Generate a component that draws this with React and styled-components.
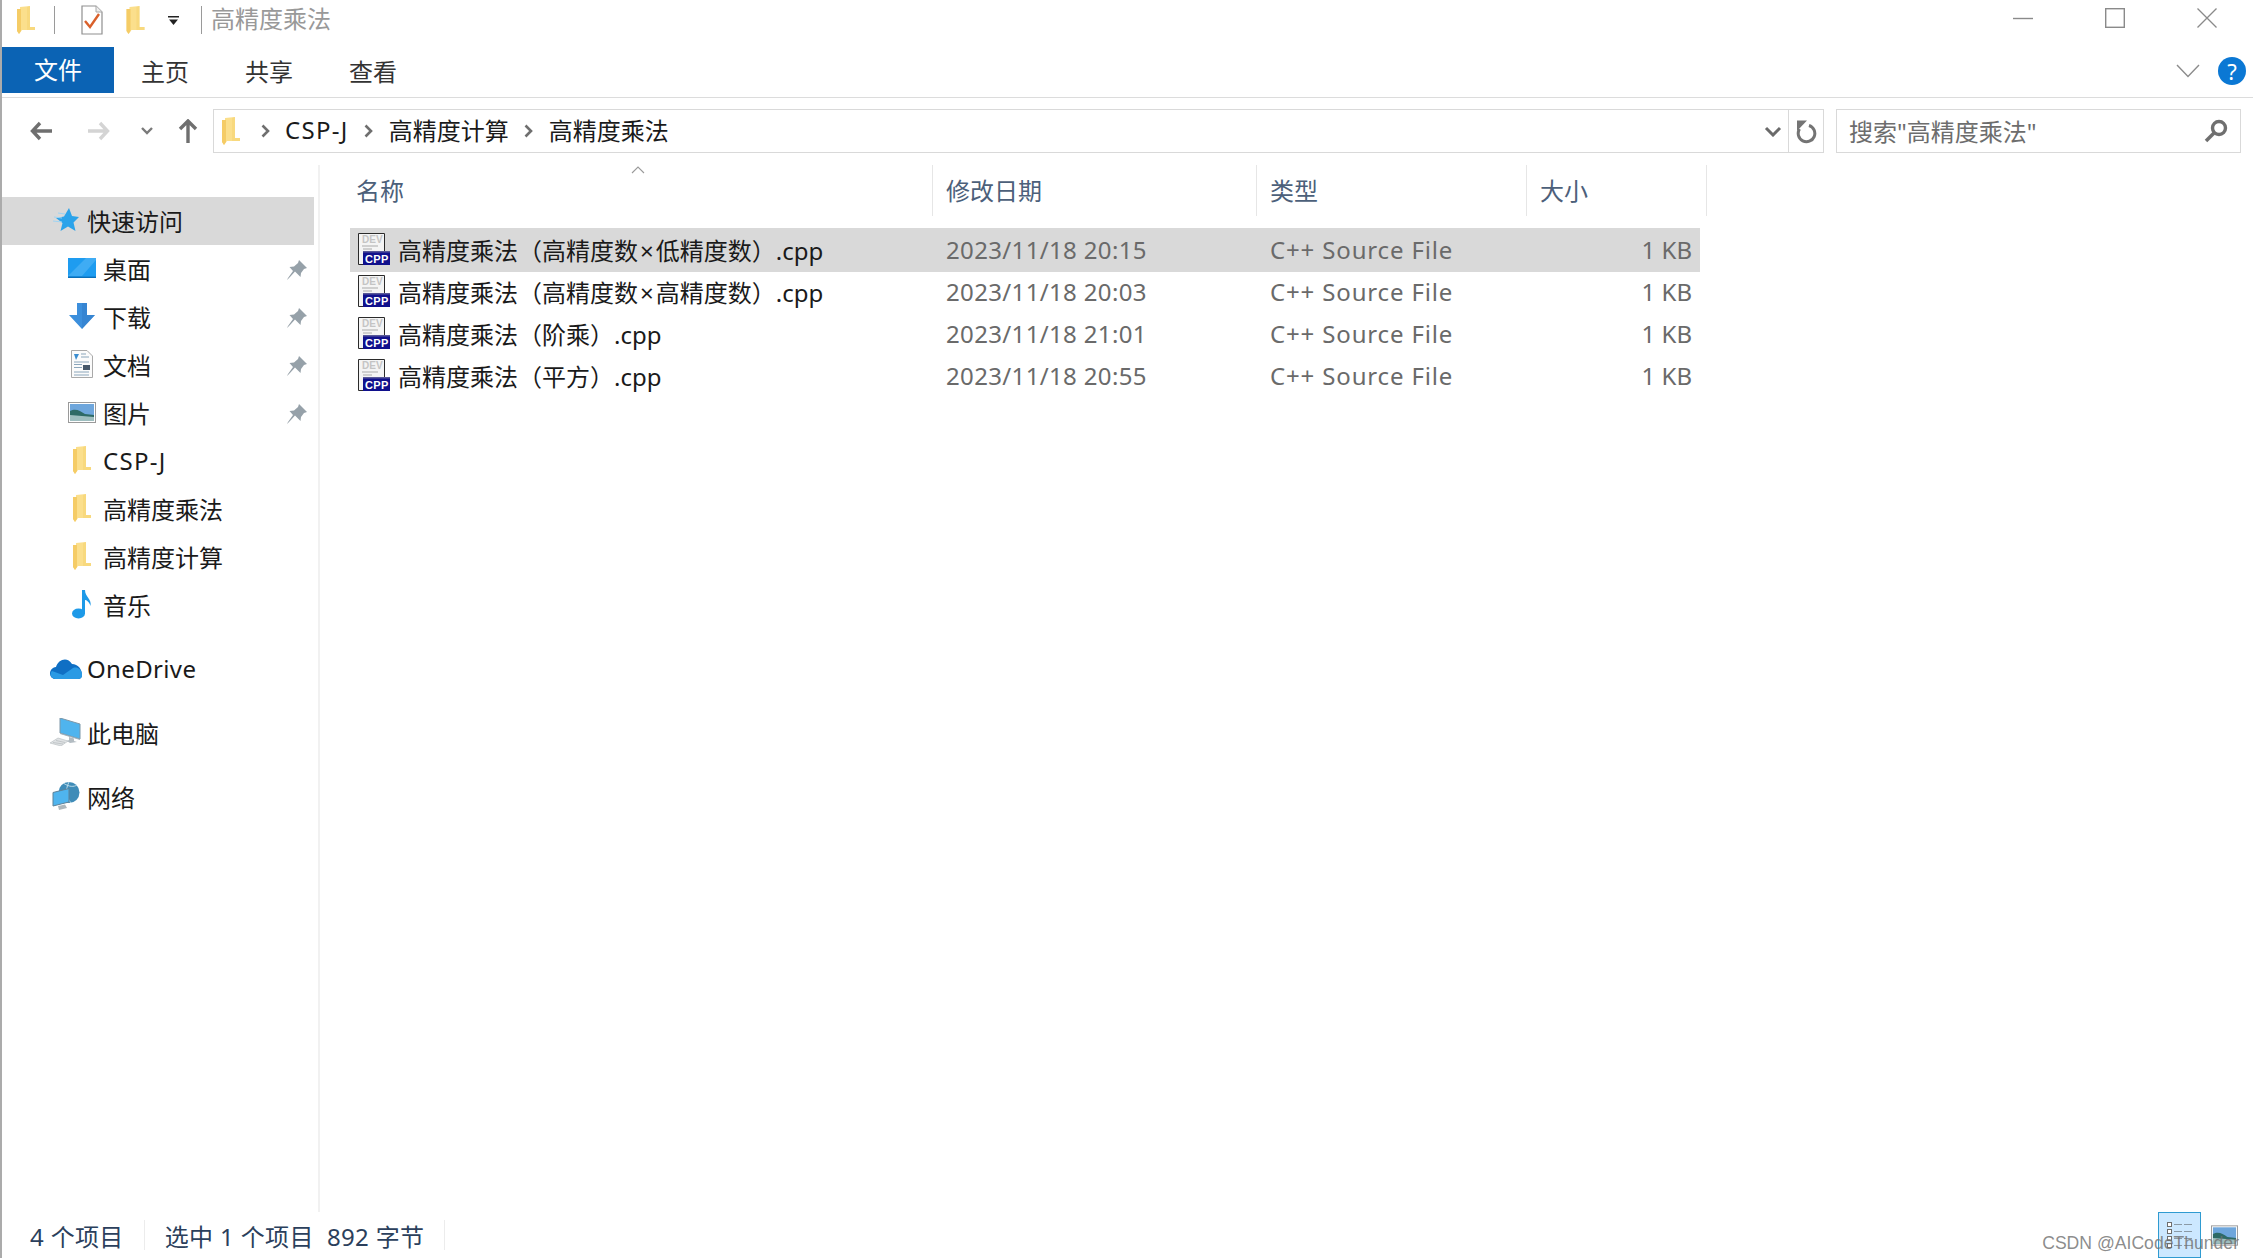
import React from "react";
import styled, { createGlobalStyle } from "styled-components";

const files = [
  { name: "高精度乘法（高精度数×低精度数）.cpp", date: "2023/11/18 20:15", selected: true },
  { name: "高精度乘法（高精度数×高精度数）.cpp", date: "2023/11/18 20:03" },
  { name: "高精度乘法（阶乘）.cpp", date: "2023/11/18 21:01" },
  { name: "高精度乘法（平方）.cpp", date: "2023/11/18 20:55" },
];

const FolderIcon = ({ w = 18, h = 28 }) => (
  <svg width={w} height={h} viewBox="0 0 18 28">
    <path d="M0 3 L3 3 L3 1 L13 0 L13 21 L18 21 L18 24 L5 24 L2 28 L0 25 Z" fill="#fbdf8c" />
    <path d="M0 3 L4 3 L4 25 L2 28 L0 25 Z" fill="#f3c65a" opacity="0.75" />
    <path d="M13 0 L13 21 L18 21 L18 24 L10 24 L10 1 Z" fill="#f7d675" opacity="0.6" />
  </svg>
);

const CheckDoc = () => (
  <svg width="22" height="30" viewBox="0 0 22 30">
    <path d="M1 1 H15 L21 7 V29 H1 Z" fill="#fff" stroke="#8f8f8f" strokeWidth="1.2" />
    <path d="M15 1 V7 H21" fill="#eee" stroke="#a8a8a8" />
    <path d="M4 16 L9 22 L18 9" fill="none" stroke="#d9602b" strokeWidth="2.4" />
  </svg>
);

const CppIcon = () => (
  <svg width="32" height="32" viewBox="0 0 32 32">
    <path d="M0.5 0.5 H26.5 V31.5 H0.5 Z" fill="#f4f4f4" stroke="#2b2b2b" />
    <DevLabel x="4" y="10">DEV</DevLabel>
    <path d="M4 13 H20 M5 16 H14" stroke="#cfcfcf" strokeWidth="2" />
    <rect x="5" y="18" width="27" height="14" fill="#10108c" />
    <path d="M5 18 H32 V19.5 H5 Z" fill="#585898" />
    <CppLabel x="7" y="29.5">CPP</CppLabel>
  </svg>
);

const Star = () => (
  <svg width="26" height="26" viewBox="0 0 26 26">
    <path d="M16 1 L19 9 L26 10 L20.5 15.5 L22.5 24 L15 19.5 L7.5 24 L9.5 16 L3 11 L11 9.5 Z" fill="#2ba3ea" />
    <path d="M0 14 L9 15 M1 10 L9 11 M5 6 L12 7" stroke="#9fd4f3" strokeWidth="1" />
  </svg>
);

const DesktopIcon = () => (
  <svg width="28" height="20" viewBox="0 0 28 20">
    <rect width="28" height="20" fill="#1e9cf0" />
    <path d="M0 18 L18 0 H28 V2 L14 18 Z" fill="#4db4f5" opacity="0.7" />
    <rect y="18.6" width="28" height="1.4" fill="#0b6fb8" />
  </svg>
);

const DownloadIcon = () => (
  <svg width="26" height="26" viewBox="0 0 26 26">
    <path d="M8 0 H18 V12 H26 L13 26 L0 12 H8 Z" fill="#3c8fdc" />
    <path d="M13 0 H18 V12 H26 L13 26 Z" fill="#2f7cc8" opacity="0.5" />
  </svg>
);

const DocIcon = () => (
  <svg width="22" height="28" viewBox="0 0 22 28">
    <path d="M0.5 0.5 H16 L21.5 6 V27.5 H0.5 Z" fill="#fbfbfb" stroke="#a9a9a9" />
    <path d="M3 4 L8 4 L5 10 Z" fill="#3b8dd0" />
    <path d="M10 4 H15 M10 7 H18 M3 12 H18 M3 22 H18 M3 25 H18" stroke="#8ba6bb" strokeWidth="1" />
    <rect x="3" y="14" width="8" height="1" fill="#8ba6bb" />
    <rect x="3" y="17" width="8" height="1" fill="#8ba6bb" />
    <rect x="12" y="15" width="7" height="5" fill="#46586a" />
  </svg>
);

const PictureIcon = ({ w = 28, h = 21 }) => (
  <svg width={w} height={h} viewBox="0 0 28 21">
    <rect x="0.5" y="0.5" width="27" height="20" fill="#fff" stroke="#9a9a9a" />
    <rect x="2" y="2" width="24" height="17" fill="#6ea6dc" />
    <path d="M2 9 C8 6 12 9 17 12 L26 13 V19 H2 Z" fill="#2e6a66" />
    <path d="M2 13 L26 15 V19 H2 Z" fill="#cfe3e6" opacity="0.7" />
  </svg>
);

const MusicIcon = () => (
  <svg width="20" height="30" viewBox="0 0 20 30">
    <ellipse cx="6.5" cy="24.5" rx="6.5" ry="5" fill="#1e9ae8" />
    <path d="M10 1 H13 C13 8 20 10 18.5 17 C17 12 14 11 13 11 V25 H10 Z" fill="#1e9ae8" />
  </svg>
);

const CloudIcon = () => (
  <svg width="32" height="21" viewBox="0 0 32 21">
    <path d="M6 21 C-2 21 -2 10 6 9 C8 2 17 -2 22 6 C28 6 32 11 32 17 C32 19 31 21 28 21 Z" fill="#0f6fc4" />
    <path d="M6 21 C1 21 -1 16 2 13 L13 17 L23 10 C28 8 33 13 32 18 C32 20 30 21 28 21 Z" fill="#2a9ae4" />
  </svg>
);

const PcIcon = () => (
  <svg width="32" height="28" viewBox="0 0 32 28">
    <path d="M10 0 L30 6 V21 L10 15 Z" fill="#4fb4ee" stroke="#7c97a8" strokeWidth="1" />
    <path d="M10 15 L30 21 V22 L10 16 Z" fill="#9fb2bd" />
    <path d="M19 19 L24 20.5 V23 L27 24 L20 25 L17 23 L19 22 Z" fill="#b3bcc2" />
    <path d="M0 25 L8 20 L18 23 L11 28 Z" fill="#dfe2e4" stroke="#b4babd" strokeWidth="0.6" />
    <path d="M3 24.5 L13 26 M6 22.5 L15 24.5" stroke="#b4babd" strokeWidth="0.7" />
  </svg>
);

const NetworkIcon = () => (
  <svg width="28" height="28" viewBox="0 0 28 28">
    <circle cx="17" cy="10.5" r="10.5" fill="#3f8cb8" />
    <path d="M12 1.5 C17 5 22 5 25 3 M17 0 C13 8 14 15 19 21" stroke="#bcdcea" strokeWidth="1" fill="none" />
    <path d="M1 10.5 L17 6.5 V20 L1 24 Z" fill="#4fb4ee" stroke="#5d8299" strokeWidth="1" />
    <path d="M6 24 L13 22.5 L15 26 L7 28 Z" fill="#aeb7bc" />
  </svg>
);

const PinIcon = () => (
  <svg width="20" height="20" viewBox="0 0 20 20">
    <path d="M12 0 L20 8 L17 9 L14 13 L13.5 17 L8 11.5 L3 17 L0 20 L1 18 L6 11 L2.5 7 L7 6.5 L11 3 Z" fill="#96a1a9" />
  </svg>
);

const navItems = [
  { label: "桌面", icon: <DesktopIcon />, pin: true },
  { label: "下载", icon: <DownloadIcon />, pin: true },
  { label: "文档", icon: <DocIcon />, pin: true },
  { label: "图片", icon: <PictureIcon />, pin: true },
  { label: "CSP-J", icon: <FolderIcon />, latin: true },
  { label: "高精度乘法", icon: <FolderIcon /> },
  { label: "高精度计算", icon: <FolderIcon /> },
  { label: "音乐", icon: <MusicIcon /> },
];

const FileName = ({ text }) => {
  const [head, tail] = text.split("×");
  if (tail === undefined) return <span>{text}</span>;
  return <span>{head}<Times>×</Times>{tail}</span>;
};

const App = () => (
  <Window>
    <GlobalStyle />
    <TitleBar>
      <QuickTool $left={15}><FolderIcon /></QuickTool>
      <TitleSep $left={19} />
      <QuickTool $left={26}><CheckDoc /></QuickTool>
      <QuickTool $left={23}><FolderIcon w={19} /></QuickTool>
      <QuickTool $left={23}>
        <svg width="11" height="9" viewBox="0 0 11 9">
          <rect width="11" height="1.5" fill="#222" />
          <path d="M1 3.5 H10 L5.5 9 Z" fill="#222" />
        </svg>
      </QuickTool>
      <TitleSep $left={22} />
      <WindowTitle>高精度乘法</WindowTitle>
      <WindowControls>
        <svg width="20" height="20" viewBox="0 0 20 20"><path d="M0 10.5 H20" stroke="#8a8a8a" strokeWidth="1.4" /></svg>
        <svg width="20" height="20" viewBox="0 0 20 20"><rect x="0.7" y="0.7" width="18.6" height="18.6" fill="none" stroke="#8a8a8a" strokeWidth="1.4" /></svg>
        <svg width="20" height="20" viewBox="0 0 20 20"><path d="M0.5 0.5 L19.5 19.5 M19.5 0.5 L0.5 19.5" stroke="#8a8a8a" strokeWidth="1.3" /></svg>
      </WindowControls>
    </TitleBar>

    <Ribbon>
      <FileTab>文件</FileTab>
      <RibbonTab>主页</RibbonTab>
      <RibbonTab>共享</RibbonTab>
      <RibbonTab>查看</RibbonTab>
      <RibbonRight>
        <svg width="24" height="14" viewBox="0 0 24 14"><path d="M1 1 L12 12.5 L23 1" fill="none" stroke="#8c8c8c" strokeWidth="1.4" /></svg>
        <HelpBadge>?</HelpBadge>
      </RibbonRight>
    </Ribbon>

    <AddressRow>
      <NavButton $w={54}>
        <svg width="22" height="20" viewBox="0 0 22 20"><path d="M10 2 L2.5 10 L10 18 M3 10 H22" fill="none" stroke="#6f6f6f" strokeWidth="3.4" /></svg>
      </NavButton>
      <NavButton $w={62}>
        <svg width="22" height="20" viewBox="0 0 22 20"><path d="M12 2 L19.5 10 L12 18 M19 10 H0" fill="none" stroke="#d4d4d4" strokeWidth="3.4" /></svg>
      </NavButton>
      <NavButton $w={34}>
        <svg width="12" height="8" viewBox="0 0 12 8"><path d="M1 1 L6 6 L11 1" fill="none" stroke="#7a7a7a" strokeWidth="2.4" /></svg>
      </NavButton>
      <NavButton $w={47}>
        <svg width="20" height="24" viewBox="0 0 20 24"><path d="M2 10 L10 2 L18 10 M10 3 V24" fill="none" stroke="#6f6f6f" strokeWidth="3.4" /></svg>
      </NavButton>
      <AddressBox>
        <FolderIcon w={18} h={30} />
        <Crumbs>
          <Chevron />
          <Crumb $latin>CSP-J</Crumb>
          <Chevron />
          <Crumb>高精度计算</Crumb>
          <Chevron />
          <Crumb>高精度乘法</Crumb>
        </Crumbs>
        <AddressEnd>
          <svg width="18" height="11" viewBox="0 0 18 11"><path d="M2 2 L9 9 L16 2" fill="none" stroke="#6a6a6a" strokeWidth="3" /></svg>
          <RefreshCell>
            <svg width="24" height="26" viewBox="0 0 24 26">
              <path d="M15 7.5 A8.3 8.3 0 1 1 5.5 11" fill="none" stroke="#747474" strokeWidth="3" />
              <path d="M3 2.5 H13 L3 13 Z" fill="#747474" />
            </svg>
          </RefreshCell>
        </AddressEnd>
      </AddressBox>
      <SearchBox>
        <SearchText>搜索"高精度乘法"</SearchText>
        <svg width="24" height="24" viewBox="0 0 24 24"><circle cx="15" cy="9" r="6.5" fill="none" stroke="#6f6f6f" strokeWidth="3.4" /><path d="M10 14 L2 22" stroke="#6f6f6f" strokeWidth="3.6" /></svg>
      </SearchBox>
    </AddressRow>

    <Main>
      <Sidebar>
        <NavRow $selected>
          <TopIcon><Star /></TopIcon>
          <span>快速访问</span>
        </NavRow>
        {navItems.map((item) => (
          <NavRow key={item.label}>
            <SubIcon>{item.icon}</SubIcon>
            <NavLabel $latin={item.latin}>{item.label}</NavLabel>
            {item.pin && <Pin><PinIcon /></Pin>}
          </NavRow>
        ))}
        <NavGroup>
          <NavRow><TopIcon><CloudIcon /></TopIcon><CloudLabel>OneDrive</CloudLabel></NavRow>
        </NavGroup>
        <NavGroup>
          <NavRow><TopIcon><PcIcon /></TopIcon><span>此电脑</span></NavRow>
        </NavGroup>
        <NavGroup>
          <NavRow><TopIcon><NetworkIcon /></TopIcon><span>网络</span></NavRow>
        </NavGroup>
      </Sidebar>

      <Content>
        <HeaderRow>
          <HeaderCell>名称</HeaderCell>
          <HeaderCell>修改日期</HeaderCell>
          <HeaderCell>类型</HeaderCell>
          <HeaderCell>大小</HeaderCell>
          <SortArrow>
            <svg width="14" height="8" viewBox="0 0 14 8"><path d="M1 7 L7 1 L13 7" fill="none" stroke="#9a9a9a" strokeWidth="1.1" /></svg>
          </SortArrow>
        </HeaderRow>
        {files.map((file) => (
          <FileRow key={file.name} $selected={file.selected}>
            <NameCell><CppIcon /><FileName text={file.name} /></NameCell>
            <DateCell>{file.date}</DateCell>
            <TypeCell>C++ Source File</TypeCell>
            <SizeCell>1 KB</SizeCell>
          </FileRow>
        ))}
      </Content>
    </Main>

    <StatusBar>
      <StatusText>4 个项目</StatusText>
      <StatusSep />
      <StatusText>选中 1 个项目&nbsp;&nbsp;892 字节</StatusText>
      <StatusSep />
      <ViewButtons>
        <DetailsButton>
          <svg width="26" height="28" viewBox="0 0 26 28">
            <g fill="#fff" stroke="#6e6e6e">
              <rect x="0.5" y="1.5" width="4" height="4" />
              <rect x="0.5" y="8.5" width="4" height="4" />
              <rect x="0.5" y="15.5" width="4" height="4" />
              <rect x="0.5" y="22.5" width="4" height="4" />
            </g>
            <path d="M7 3.5 H15 M17 3.5 H25 M7 10.5 H15 M17 10.5 H25 M7 17.5 H15 M17 17.5 H25 M7 24.5 H15 M17 24.5 H25" stroke="#8a9aa6" strokeWidth="1" />
          </svg>
        </DetailsButton>
        <PictureIcon w={27} h={21} />
      </ViewButtons>
    </StatusBar>
    <Watermark>CSDN @AICodeThunder</Watermark>
  </Window>
);

const Chevron = () => (
  <ChevronBox>
    <svg width="9" height="14" viewBox="0 0 9 14"><path d="M1.5 1.5 L7 7 L1.5 12.5" fill="none" stroke="#6f6f6f" strokeWidth="2.6" /></svg>
  </ChevronBox>
);

const GlobalStyle = createGlobalStyle`
  html, body {
    margin: 0;
    padding: 0;
    background: #fff;
  }
  * {
    box-sizing: border-box;
  }
  svg {
    display: block;
    flex-shrink: 0;
  }
`;

const Window = styled.div`
  position: relative;
  display: flex;
  flex-direction: column;
  width: 2253px;
  height: 1258px;
  overflow: hidden;
  border-left: 2px solid #ababab;
  background: #fff;
  color: #1a1a1a;
  font-family: "Noto Sans", "Noto Sans CJK SC", sans-serif;
  font-size: 24px;
`;

const TitleBar = styled.div`
  display: flex;
  align-items: center;
  height: 47px;
  padding-bottom: 7px;
`;

const QuickTool = styled.div`
  margin-left: ${(p) => p.$left}px;
`;

const TitleSep = styled.div`
  width: 1px;
  height: 28px;
  margin-left: ${(p) => p.$left}px;
  background: #9a9a9a;
`;

const WindowTitle = styled.div`
  margin-left: 9px;
  margin-bottom: 6px;
  color: #999;
`;

const WindowControls = styled.div`
  display: flex;
  gap: 72px;
  margin-left: auto;
  margin-bottom: 4px;
  padding-right: 36px;
`;

const Ribbon = styled.div`
  display: flex;
  height: 51px;
  border-bottom: 1px solid #dcdcdc;
`;

const FileTab = styled.div`
  width: 112px;
  height: 46px;
  background: #0b63b4;
  color: #fff;
  text-align: center;
  line-height: 46px;
`;

const RibbonTab = styled.div`
  width: 104px;
  height: 46px;
  padding-left: 27px;
  padding-top: 2px;
  line-height: 46px;
  color: #333;
`;

const RibbonRight = styled.div`
  display: flex;
  align-items: center;
  gap: 18px;
  height: 46px;
  margin-left: auto;
  padding-top: 2px;
  padding-right: 7px;
`;

const HelpBadge = styled.div`
  width: 28px;
  height: 28px;
  border-radius: 50%;
  background: #0b78d4;
  color: #fff;
  font-size: 22px;
  line-height: 28px;
  text-align: center;
`;

const AddressRow = styled.div`
  display: flex;
  align-items: flex-start;
  height: 67px;
  padding: 11px 10px 0 12px;
`;

const NavButton = styled.div`
  display: flex;
  align-items: center;
  justify-content: center;
  width: ${(p) => p.$w}px;
  height: 44px;
`;

const AddressBox = styled.div`
  display: flex;
  align-items: center;
  width: 1611px;
  height: 44px;
  margin-left: 2px;
  padding-left: 8px;
  border: 1px solid #d9d9d9;
`;

const Crumbs = styled.div`
  display: flex;
  align-items: center;
  padding-left: 19px;
`;

const ChevronBox = styled.div`
  display: flex;
  justify-content: center;
  width: 12px;
`;

const Crumb = styled.div`
  margin: 0 14px 3px;
  letter-spacing: ${(p) => (p.$latin ? "1.3px" : "0")};
  color: #1a1a1a;
`;

const AddressEnd = styled.div`
  display: flex;
  align-items: center;
  gap: 6px;
  margin-left: auto;
  height: 100%;
`;

const RefreshCell = styled.div`
  display: flex;
  align-items: center;
  justify-content: center;
  width: 35px;
  height: 100%;
  border-left: 1px solid #d9d9d9;
`;

const SearchBox = styled.div`
  display: flex;
  align-items: center;
  justify-content: space-between;
  width: 405px;
  height: 44px;
  margin-left: 12px;
  padding: 0 12px;
  border: 1px solid #d9d9d9;
`;

const SearchText = styled.div`
  margin-bottom: 2px;
  color: #6d6d6d;
`;

const Main = styled.div`
  display: flex;
  flex: 1;
  min-height: 0;
`;

const Sidebar = styled.nav`
  width: 318px;
  padding: 32px 4px 0 0;
  border-right: 2px solid #f1f1f1;
`;

const NavRow = styled.div`
  position: relative;
  display: flex;
  align-items: center;
  height: 48px;
  padding-bottom: 2px;
  background: ${(p) => (p.$selected ? "#d9d9d9" : "transparent")};
`;

const NavLabel = styled.span`
  letter-spacing: ${(p) => (p.$latin ? "1.3px" : "0")};
`;

const CloudLabel = styled.span`
  letter-spacing: 0.35px;
`;

const NavGroup = styled.div`
  margin-top: 16px;
`;

const TopIcon = styled.div`
  display: flex;
  justify-content: center;
  width: 36px;
  margin: 0 3px 0 46px;
`;

const SubIcon = styled.div`
  display: flex;
  justify-content: center;
  width: 32px;
  margin: 0 5px 0 64px;
`;

const Pin = styled.div`
  position: absolute;
  right: 7px;
  top: 15px;
`;

const Content = styled.main`
  flex: 1;
  padding-left: 30px;
`;

const HeaderRow = styled.div`
  position: relative;
  display: grid;
  grid-template-columns: 583px 324px 270px 180px;
  width: 1357px;
  height: 51px;
  margin-bottom: 13px;
`;

const SortArrow = styled.div`
  position: absolute;
  left: 281px;
  top: 1px;
`;

const HeaderCell = styled.div`
  padding-left: 13px;
  border-right: 1px solid #e6e6e6;
  color: #4c607a;
  line-height: 51px;

  &:first-of-type {
    padding-left: 6px;
  }
`;

const FileRow = styled.div`
  display: grid;
  grid-template-columns: 583px 324px 270px 173px;
  align-items: center;
  width: 1350px;
  height: 42px;
  padding-bottom: 2px;
  background: ${(p) => (p.$selected ? "#d9d9d9" : "transparent")};
  box-shadow: ${(p) => (p.$selected ? "0 -1px 0 #d9d9d9, 0 1px 0 #d9d9d9" : "none")};
`;

const NameCell = styled.div`
  display: flex;
  align-items: center;
  gap: 8px;
  padding-left: 8px;
  white-space: nowrap;
`;

const Times = styled.span`
  margin: 0 2px;
`;

const MetaCell = styled.div`
  padding-left: 13px;
  color: #6a6a6a;
`;

const DateCell = styled(MetaCell)`
  letter-spacing: 0.35px;
`;

const TypeCell = styled(MetaCell)`
  letter-spacing: 0.85px;
`;

const SizeCell = styled(MetaCell)`
  padding-right: 8px;
  text-align: right;
`;

const CppLabel = styled.text`
  fill: #fff;
  font-family: "Liberation Sans", sans-serif;
  font-size: 11px;
  font-weight: 700;
  letter-spacing: 0.4px;
`;

const DevLabel = styled.text`
  fill: #c4c4c4;
  font-family: "Liberation Sans", sans-serif;
  font-size: 10px;
  font-weight: 700;
`;

const StatusBar = styled.footer`
  display: flex;
  align-items: center;
  height: 46px;
  padding-left: 28px;
`;

const StatusText = styled.div`
  color: #2b3f5c;
  letter-spacing: 0.35px;
  white-space: pre;
`;

const StatusSep = styled.div`
  width: 1px;
  height: 30px;
  margin: 0 20px;
  background: #ececec;
`;

const ViewButtons = styled.div`
  display: flex;
  align-items: center;
  gap: 10px;
  margin-left: auto;
  padding-right: 15px;
`;

const DetailsButton = styled.div`
  display: flex;
  align-items: center;
  justify-content: center;
  width: 43px;
  height: 46px;
  border: 1px solid #2f9bd1;
  background: #cce8ff;
`;

const Watermark = styled.div`
  position: absolute;
  right: 14px;
  bottom: 4px;
  color: rgba(110, 110, 110, 0.8);
  font-family: "Liberation Sans", sans-serif;
  font-size: 17.6px;
`;

export default App;
